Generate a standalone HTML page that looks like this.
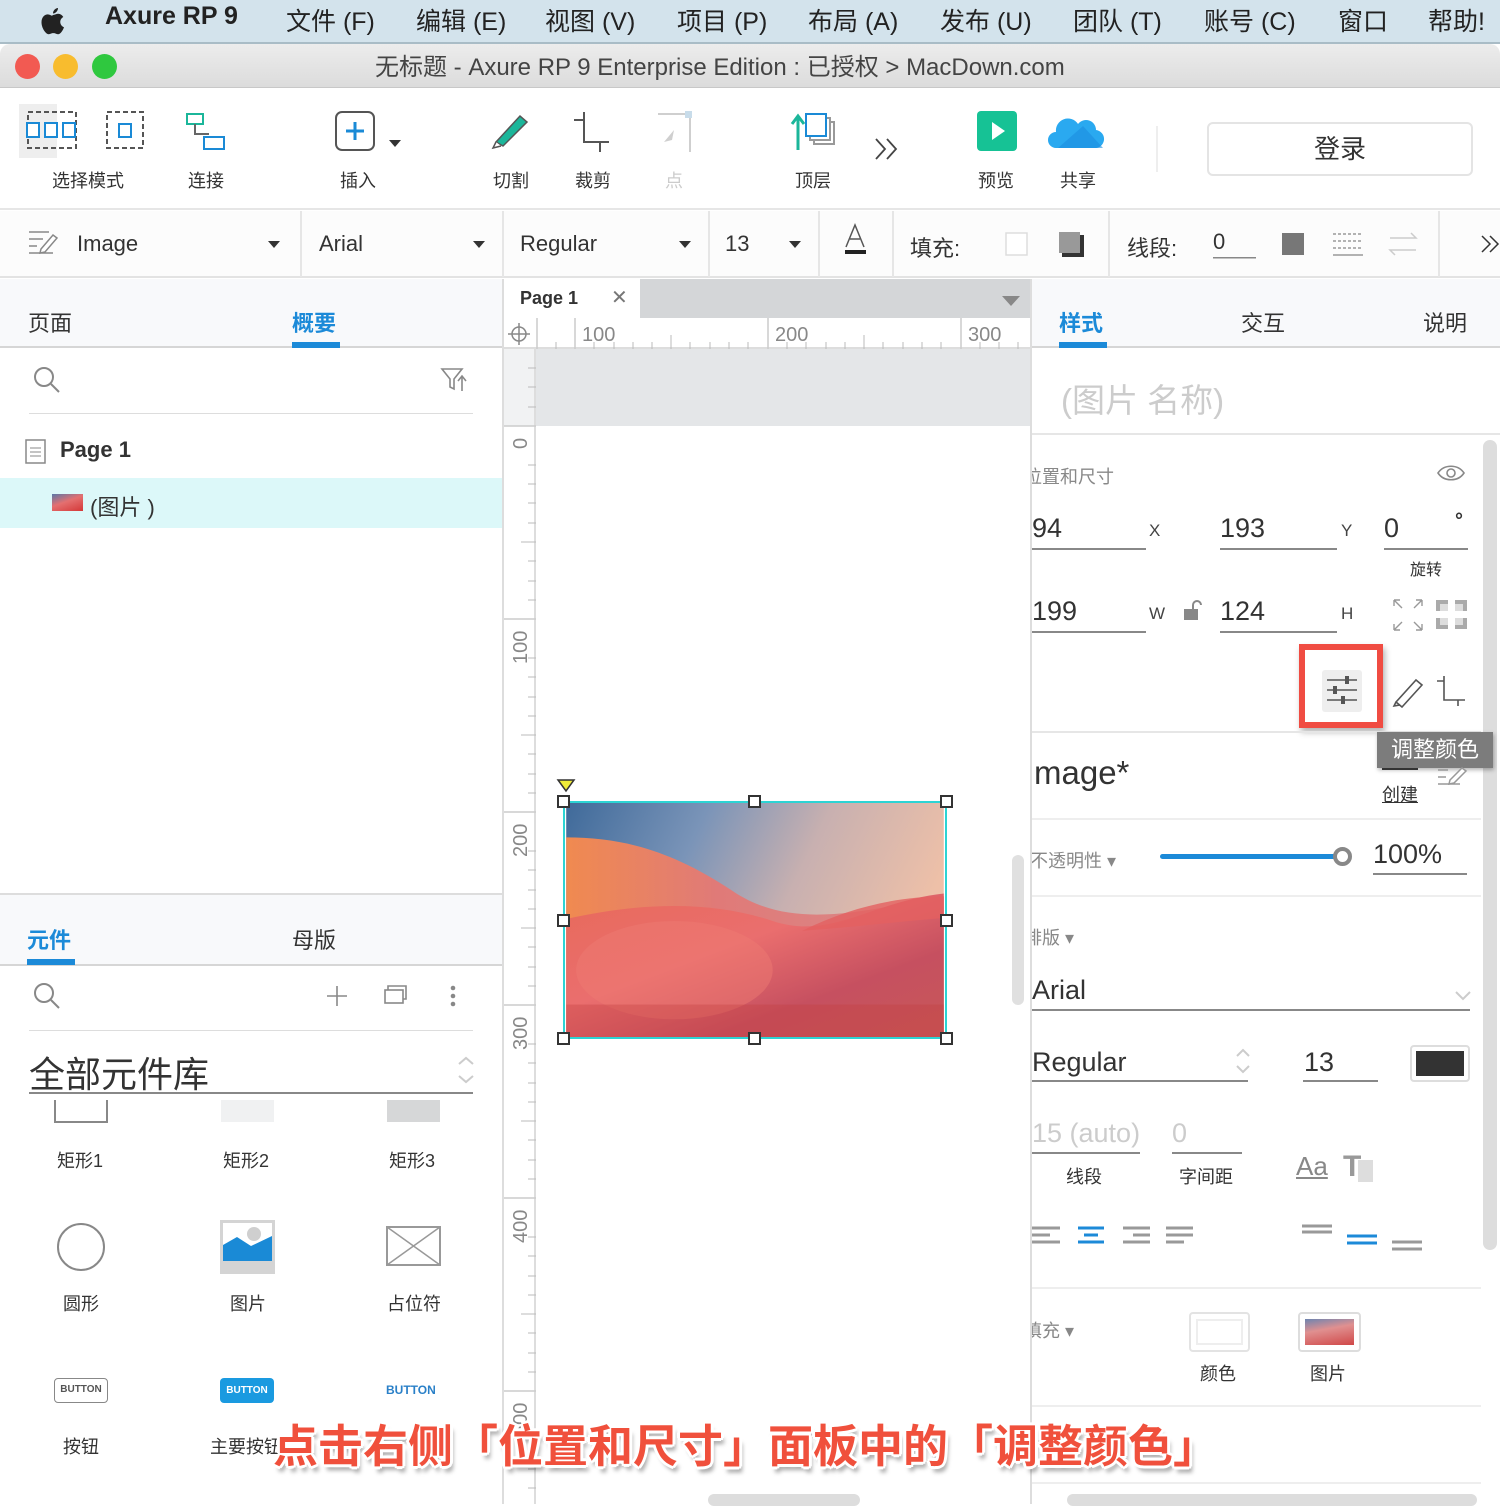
<!DOCTYPE html>
<html><head><meta charset="utf-8">
<style>
*{margin:0;padding:0;box-sizing:border-box}
body{width:1500px;height:1504px;position:relative;overflow:hidden;background:#fff;font-family:"Liberation Sans","Noto Sans CJK SC",sans-serif;color:#333}
.a{position:absolute;white-space:nowrap}
.menu{left:0;top:0;width:1500px;height:44px;background:#d3e3ec;border-bottom:2px solid #a9bcc6}
.menu span{position:absolute;top:2px;font-size:25px;color:#222}
.title{left:0;top:44px;width:1500px;height:44px;background:linear-gradient(#ececec,#dcdcdc);border-bottom:1px solid #c8c8c8;border-radius:10px 10px 0 0}
.dot{position:absolute;width:25px;height:25px;border-radius:50%;top:10px}
.tb{font-size:18px;color:#333}
.lbl{font-size:18px;color:#333}
.ul{position:absolute;height:2px;background:#888}
.clip{position:absolute;left:1032px;width:468px;overflow:hidden}
.cap{font-size:45px;font-weight:bold;color:#f0503c;text-shadow:3px 0 #fff,-3px 0 #fff,0 3px #fff,0 -3px #fff,2px 2px #fff,-2px -2px #fff,2px -2px #fff,-2px 2px #fff,3px 6px 4px rgba(0,0,0,.35)}
</style></head><body>

<div class="a menu">
<svg style="position:absolute;left:38px;top:6px" width="30" height="32" viewBox="0 0 30 32"><path d="M20 2c0 3-2.5 5.5-5 5.5 0-3 2.5-5.5 5-5.5zM15 9c2 0 3-1.2 5-1.2 2.5 0 4.3 1.5 5.3 3.2-4.5 2.5-3.7 8.5 0.7 10.2-1 3-3.5 7-6 7-1.8 0-2.4-1.1-4.6-1.1-2.3 0-3 1.1-4.7 1.1-2.8 0-7.2-6-7.2-12 0-5 3.2-7.8 6.3-7.8 1.9 0 3.3 1.3 4.2 1.3z" fill="#222"/></svg>
<span style="left:105px;font-weight:bold">Axure RP 9</span>
<span style="left:286px">文件 (F)</span><span style="left:416px">编辑 (E)</span><span style="left:545px">视图 (V)</span><span style="left:677px">项目 (P)</span><span style="left:808px">布局 (A)</span><span style="left:940px">发布 (U)</span><span style="left:1073px">团队 (T)</span><span style="left:1204px">账号 (C)</span><span style="left:1338px">窗口</span><span style="left:1428px">帮助!</span>
</div>
<div class="a title">
<div class="dot" style="left:15px;background:#f25a52"></div>
<div class="dot" style="left:53px;background:#f8bc2e"></div>
<div class="dot" style="left:92px;background:#2fc83f"></div>
<div class="a" style="left:375px;top:3px;font-size:24px;color:#444">无标题 - Axure RP 9 Enterprise Edition : 已授权 &gt; MacDown.com</div>
</div>

<div class="a" style="left:0;top:89px;width:1500px;height:121px;background:#fff;border-bottom:2px solid #e6e6e6"></div>
<div class="a" style="left:19px;top:104px;width:38px;height:54px;background:#eee"></div>
<svg class="a" style="left:25px;top:110px" width="125" height="42">
<rect x="3" y="2" width="48" height="36" fill="none" stroke="#555" stroke-width="2" stroke-dasharray="5 3"/>
<rect x="2" y="13" width="12" height="14" fill="#fff" stroke="#1a8ad6" stroke-width="2"/><rect x="20" y="13" width="12" height="14" fill="#fff" stroke="#1a8ad6" stroke-width="2"/><rect x="38" y="13" width="12" height="14" fill="#fff" stroke="#1a8ad6" stroke-width="2"/>
<rect x="82" y="2" width="36" height="36" fill="none" stroke="#555" stroke-width="2" stroke-dasharray="5 3"/>
<rect x="94" y="14" width="12" height="13" fill="none" stroke="#1a8ad6" stroke-width="2"/>
</svg>
<svg class="a" style="left:185px;top:112px" width="45" height="40"><rect x="2" y="2" width="16" height="10" fill="none" stroke="#1bb69a" stroke-width="2"/><path d="M10 12v10h14" stroke="#666" stroke-width="2" fill="none"/><rect x="19" y="25" width="20" height="12" fill="none" stroke="#1a8ad6" stroke-width="2"/></svg>
<div class="a tb" style="left:52px;top:167px">选择模式</div>
<div class="a tb" style="left:188px;top:167px">连接</div>
<svg class="a" style="left:334px;top:110px" width="70" height="44"><rect x="2" y="2" width="38" height="38" rx="6" fill="none" stroke="#555" stroke-width="2"/><path d="M21 12v18M12 21h18" stroke="#1a8ad6" stroke-width="3"/><path d="M55 30l6 7 6-7z" fill="#333"/></svg>
<div class="a tb" style="left:340px;top:167px">插入</div>
<svg class="a" style="left:490px;top:112px" width="45" height="40"><path d="M6 30L30 4l7 6-24 24z" fill="#1bb69a" stroke="#555" stroke-width="1.5"/><path d="M6 30l-3 6 8-2" fill="#fff" stroke="#555" stroke-width="1.5"/></svg>
<svg class="a" style="left:570px;top:110px" width="45" height="44"><path d="M4 10h10M14 2v30h16v10M30 32h9" stroke="#555" stroke-width="2" fill="none"/></svg>
<svg class="a" style="left:652px;top:110px" width="45" height="44" opacity=".4"><path d="M6 4h32v38" stroke="#888" stroke-width="2" fill="none"/><rect x="33" y="1" width="7" height="7" fill="#7ac"/><path d="M12 32l10-12-2 10z" fill="#888"/></svg>
<div class="a tb" style="left:493px;top:167px">切割</div>
<div class="a tb" style="left:575px;top:167px">裁剪</div>
<div class="a tb" style="left:665px;top:167px;color:#ccc">点</div>
<svg class="a" style="left:790px;top:112px" width="48" height="40"><path d="M8 38V4M2 12l6-8 6 8" stroke="#1bb69a" stroke-width="3" fill="none"/><rect x="24" y="10" width="20" height="22" fill="#fff" stroke="#999" stroke-width="2"/><rect x="20" y="6" width="20" height="22" fill="#fff" stroke="#999" stroke-width="2"/><rect x="16" y="2" width="20" height="22" fill="#fff" stroke="#1a8ad6" stroke-width="2"/></svg>
<div class="a tb" style="left:795px;top:167px">顶层</div>
<svg class="a" style="left:874px;top:137px" width="28" height="24"><path d="M2 2l9 10-9 10M13 2l9 10-9 10" stroke="#444" stroke-width="1.8" fill="none"/></svg>
<svg class="a" style="left:977px;top:111px" width="40" height="42"><rect x="0" y="0" width="40" height="40" rx="4" fill="#16c295"/><path d="M15 11v18l13-9z" fill="#fff"/></svg>
<svg class="a" style="left:1048px;top:110px" width="60" height="42"><path d="M8 38a8 8 0 010-16 12 12 0 0122-8 10 10 0 0118 6 9 9 0 01-2 18z" fill="#2aa9f0"/><path d="M10 38l25-22 20 22z" fill="#1d8ee0" opacity=".6"/></svg>
<div class="a tb" style="left:978px;top:167px">预览</div>
<div class="a tb" style="left:1060px;top:167px">共享</div>
<div class="a" style="left:1156px;top:126px;width:2px;height:46px;background:#eee"></div>
<div class="a" style="left:1207px;top:122px;width:266px;height:54px;border:2px solid #e4e4e4;border-radius:6px;font-size:26px;text-align:center;line-height:50px;color:#333">登录</div>

<div class="a" style="left:0;top:211px;width:1500px;height:67px;background:#fcfcfc;border-bottom:2px solid #e3e3e3"></div>
<svg class="a" style="left:27px;top:229px" width="32" height="28"><path d="M2 3h20M2 10h14M2 17h8M2 24h24" stroke="#888" stroke-width="1.5"/><path d="M14 20l12-14 4 3-12 14-5 1z" fill="#fff" stroke="#888" stroke-width="1.5"/></svg>
<div class="a" style="left:77px;top:231px;font-size:22px;color:#333">Image</div>
<div class="a" style="left:300px;top:211px;width:2px;height:66px;background:#e6e6e6"></div>
<div class="a" style="left:319px;top:231px;font-size:22px">Arial</div>
<div class="a" style="left:502px;top:211px;width:2px;height:66px;background:#e6e6e6"></div>
<div class="a" style="left:520px;top:231px;font-size:22px">Regular</div>
<div class="a" style="left:708px;top:211px;width:2px;height:66px;background:#e6e6e6"></div>
<div class="a" style="left:725px;top:231px;font-size:22px">13</div>
<div class="a" style="left:818px;top:211px;width:2px;height:66px;background:#e6e6e6"></div>
<div class="a" style="left:892px;top:211px;width:2px;height:66px;background:#e6e6e6"></div>
<div class="a" style="left:1108px;top:211px;width:2px;height:66px;background:#e6e6e6"></div>
<div class="a" style="left:1438px;top:211px;width:2px;height:66px;background:#e6e6e6"></div>
<svg class="a" style="left:0;top:211px" width="1500" height="66">
<path d="M268 30l6 7 6-7zM473 30l6 7 6-7zM679 30l6 7 6-7zM789 30l6 7 6-7z" fill="#333"/>
<path d="M846 36l9-22 9 22M850 28h10" stroke="#555" stroke-width="1.5" fill="none"/><rect x="845" y="39" width="21" height="4" fill="#222"/>
<rect x="1006" y="22" width="21" height="22" fill="#fff" stroke="#ddd" stroke-width="1.5"/>
<rect x="1062" y="24" width="22" height="22" fill="#333"/><rect x="1059" y="21" width="21" height="21" fill="#999"/>
<rect x="1213" y="46" width="43" height="1.5" fill="#888"/>
<rect x="1282" y="22" width="22" height="22" fill="#777"/>
<path d="M1333 23h30M1333 30h30M1333 37h30" stroke="#999" stroke-width="1.5" stroke-dasharray="3 2"/><path d="M1333 44h30" stroke="#999" stroke-width="1.5"/>
<path d="M1390 27h26l-5-5M1416 39h-26l5 5" stroke="#ccc" stroke-width="1.5" fill="none"/>
<path d="M1482 25l8 8-8 8M1490 25l8 8-8 8" stroke="#333" stroke-width="1.5" fill="none"/>
</svg>
<div class="a" style="left:910px;top:231px;font-size:22px">填充:</div>
<div class="a" style="left:1127px;top:231px;font-size:22px">线段:</div>
<div class="a" style="left:1213px;top:229px;font-size:22px">0</div>

<div class="a" style="left:0;top:279px;width:502px;height:69px;background:#f8f9fb;border-bottom:2px solid #d6d6d6"></div>
<div class="a" style="left:28px;top:306px;font-size:22px">页面</div>
<div class="a" style="left:292px;top:306px;font-size:22px;color:#1c8ad8;font-weight:bold">概要</div>
<div class="a" style="left:292px;top:342px;width:48px;height:6px;background:#1c8ad8"></div>
<svg class="a" style="left:32px;top:365px" width="30" height="30"><circle cx="12" cy="12" r="9" fill="none" stroke="#888" stroke-width="2"/><path d="M19 19l8 8" stroke="#888" stroke-width="2"/></svg>
<svg class="a" style="left:440px;top:367px" width="30" height="26"><path d="M2 2h20l-8 10v10l-4-2v-8z" fill="none" stroke="#888" stroke-width="1.6"/><path d="M22 24V10M18 14l4-5 4 5" stroke="#888" stroke-width="1.6" fill="none"/></svg>
<div class="a" style="left:29px;top:413px;width:444px;height:1px;background:#ddd"></div>
<svg class="a" style="left:25px;top:439px" width="22" height="26"><rect x="1" y="1" width="19" height="23" fill="#fff" stroke="#888" stroke-width="1.5"/><path d="M5 9h11M5 13h11M5 17h11" stroke="#888"/></svg>
<div class="a" style="left:60px;top:437px;font-size:22px;font-weight:bold">Page 1</div>
<div class="a" style="left:0;top:478px;width:502px;height:50px;background:#dcf8f9"></div>
<div class="a" style="left:52px;top:494px;width:31px;height:17px;background:linear-gradient(160deg,#5a78a8,#e47070 45%,#d43838)"></div>
<div class="a" style="left:90px;top:490px;font-size:22px">(图片 )</div>

<div class="a" style="left:0;top:893px;width:502px;height:2px;background:#ddd"></div>
<div class="a" style="left:0;top:895px;width:502px;height:71px;background:#f8f9fb;border-bottom:2px solid #d6d6d6"></div>
<div class="a" style="left:27px;top:923px;font-size:22px;color:#1c8ad8;font-weight:bold">元件</div>
<div class="a" style="left:27px;top:959px;width:48px;height:6px;background:#1c8ad8"></div>
<div class="a" style="left:292px;top:923px;font-size:22px">母版</div>
<svg class="a" style="left:32px;top:981px" width="440" height="32"><circle cx="12" cy="12" r="9" fill="none" stroke="#888" stroke-width="2"/><path d="M19 19l8 8" stroke="#888" stroke-width="2"/>
<path d="M305 5v20M295 15h20" stroke="#888" stroke-width="1.6"/><rect x="353" y="9" width="18" height="13" fill="none" stroke="#888" stroke-width="1.6"/><path d="M356 9V5h18v13h-3" stroke="#888" stroke-width="1.6" fill="none"/>
<circle cx="421" cy="7" r="2.3" fill="#888"/><circle cx="421" cy="15" r="2.3" fill="#888"/><circle cx="421" cy="23" r="2.3" fill="#888"/></svg>
<div class="a" style="left:29px;top:1030px;width:444px;height:1px;background:#ddd"></div>
<div class="a" style="left:29px;top:1046px;font-size:36px;color:#333">全部元件库</div>
<svg class="a" style="left:456px;top:1054px" width="20" height="32"><path d="M3 10l7-6 7 6M3 22l7 6 7-6" stroke="#ccc" stroke-width="2" fill="none"/></svg>
<div class="a" style="left:29px;top:1092px;width:444px;height:2px;background:#888"></div>
<div class="a" style="left:54px;top:1100px;width:54px;height:23px;border:2px solid #888;border-top:none"></div>
<div class="a" style="left:221px;top:1100px;width:53px;height:22px;background:#f0f1f2"></div>
<div class="a" style="left:387px;top:1100px;width:53px;height:22px;background:#d6d7d8"></div>
<div class="a lbl" style="left:57px;top:1147px">矩形1</div>
<div class="a lbl" style="left:223px;top:1147px">矩形2</div>
<div class="a lbl" style="left:389px;top:1147px">矩形3</div>
<div class="a" style="left:57px;top:1223px;width:48px;height:48px;border:2px solid #888;border-radius:50%"></div>
<svg class="a" style="left:220px;top:1220px" width="56" height="54"><rect width="55" height="54" fill="#d4d4d4"/><rect x="3" y="3" width="49" height="38" fill="#fff"/><path d="M3 41V25l14-8 14 9 21-10v25z" fill="#1a8ad6"/><circle cx="34" cy="14" r="7" fill="#cfcfcf"/></svg>
<svg class="a" style="left:386px;top:1226px" width="56" height="42"><rect x="1" y="1" width="53" height="38" fill="#fff" stroke="#999" stroke-width="2"/><path d="M1 1l53 38M54 1L1 39" stroke="#999" stroke-width="1.5"/></svg>
<div class="a lbl" style="left:63px;top:1290px">圆形</div>
<div class="a lbl" style="left:230px;top:1290px">图片</div>
<div class="a lbl" style="left:387px;top:1290px">占位符</div>
<div class="a" style="left:54px;top:1378px;width:54px;height:25px;border:1.5px solid #888;border-radius:4px;font-size:10px;font-weight:bold;text-align:center;line-height:22px;color:#555">BUTTON</div>
<div class="a" style="left:220px;top:1378px;width:54px;height:25px;background:#1a9ae0;border-radius:4px;font-size:10px;font-weight:bold;text-align:center;line-height:25px;color:#fff">BUTTON</div>
<div class="a" style="left:386px;top:1383px;font-size:12px;font-weight:bold;color:#2a80c8">BUTTON</div>
<div class="a lbl" style="left:63px;top:1433px">按钮</div>
<div class="a lbl" style="left:210px;top:1433px">主要按钮</div>

<div class="a" style="left:502px;top:279px;width:2px;height:1225px;background:#ddd"></div>
<div class="a" style="left:504px;top:279px;width:527px;height:39px;background:#d4d6d8"></div>
<div class="a" style="left:504px;top:279px;width:136px;height:39px;background:#fff"></div>
<div class="a" style="left:520px;top:288px;font-size:18px;font-weight:bold">Page 1</div>
<div class="a" style="left:611px;top:285px;font-size:20px;color:#777">✕</div>
<svg class="a" style="left:1002px;top:296px" width="20" height="12"><path d="M0 0h18l-9 10z" fill="#888"/></svg>
<div class="a" style="left:504px;top:318px;width:527px;height:31px;background:#fff;border-bottom:2px solid #ddd"></div>
<svg class="a" style="left:504px;top:318px" width="527" height="31"><circle cx="15" cy="16" r="7" fill="none" stroke="#888" stroke-width="1.5"/><path d="M15 5v22M4 16h22" stroke="#888" stroke-width="1.5"/>
<path d="M33 0v31M71 0v31M264 0v31M457 0v31" stroke="#ccc" stroke-width="1.5"/>
<path d="M52 24v7M90 24v7M110 24v7M129 24v7M148 24v7M167 17v14M186 24v7M206 24v7M225 24v7M244 24v7M283 24v7M302 24v7M322 24v7M341 24v7M360 17v14M379 24v7M399 24v7M418 24v7M437 24v7M476 24v7M495 24v7M514 24v7" stroke="#bbb"/>
<text x="78" y="23" font-size="20" fill="#888" font-family="Liberation Sans">100</text><text x="271" y="23" font-size="20" fill="#888" font-family="Liberation Sans">200</text><text x="464" y="23" font-size="20" fill="#888" font-family="Liberation Sans">300</text></svg>
<div class="a" style="left:504px;top:349px;width:32px;height:1155px;background:#fff;border-right:2px solid #ddd"></div>
<div class="a" style="left:504px;top:349px;width:32px;height:77px;background:#f1f2f3;border-right:2px solid #ddd"></div>
<svg class="a" style="left:504px;top:349px" width="32" height="1155">
<g stroke="#bbb"><path d="M24 19h8M24 38h8M24 58h8M24 116h8M24 135h8M24 154h8M24 174h8M17 193h15M24 212h8M24 232h8M24 251h8M24 270h8M24 309h8M24 328h8M24 348h8M24 367h8M17 386h15M24 405h8M24 425h8M24 444h8M24 463h8M24 502h8M24 521h8M24 541h8M24 560h8M17 579h15M24 598h8M24 618h8M24 637h8M24 656h8M24 695h8M24 714h8M24 734h8M24 753h8M17 772h15M24 791h8M24 811h8M24 830h8M24 849h8M24 888h8M24 907h8M24 927h8M24 946h8M17 965h15M24 984h8M24 1004h8M24 1023h8M24 1042h8M24 1081h8M24 1100h8M24 1120h8M24 1139h8"/></g>
<path d="M0 77h32M0 270h32M0 463h32M0 656h32M0 849h32M0 1042h32" stroke="#ccc" stroke-width="1.5"/>
<g font-size="20" fill="#888" font-family="Liberation Sans"><text transform="translate(23,100) rotate(-90)">0</text><text transform="translate(23,315) rotate(-90)">100</text><text transform="translate(23,508) rotate(-90)">200</text><text transform="translate(23,701) rotate(-90)">300</text><text transform="translate(23,894) rotate(-90)">400</text><text transform="translate(23,1087) rotate(-90)">500</text></g></svg>
<div class="a" style="left:536px;top:349px;width:495px;height:77px;background:#e4e6e8"></div>
<div class="a" style="left:1012px;top:855px;width:12px;height:150px;background:#e0e0e0;border-radius:6px"></div>
<div class="a" style="left:708px;top:1494px;width:152px;height:12px;background:#ddd;border-radius:6px"></div>

<svg class="a" style="left:563px;top:801px;border:2px solid #2cd4d4" width="384" height="238" viewBox="0 0 384 238">
<defs>
<linearGradient id="sky" x1="0" y1="0" x2="1" y2="0.3"><stop offset="0" stop-color="#3f6a9a"/><stop offset=".35" stop-color="#7a94b8"/><stop offset=".65" stop-color="#c8b0b0"/><stop offset="1" stop-color="#eec0a8"/></linearGradient>
<linearGradient id="w1" x1="0" y1="0" x2="1" y2="0"><stop offset="0" stop-color="#f08a50"/><stop offset=".4" stop-color="#e07a78"/><stop offset="1" stop-color="#d98a8a"/></linearGradient>
<linearGradient id="w2" x1="0" y1="0" x2="1" y2="1"><stop offset="0" stop-color="#e86a5a"/><stop offset=".4" stop-color="#ea6e6e"/><stop offset=".7" stop-color="#c65060"/><stop offset="1" stop-color="#c85858"/></linearGradient>
</defs>
<rect width="384" height="238" fill="url(#sky)"/>
<path d="M0 35C60 35 110 50 170 90S300 110 384 95V238H0z" fill="url(#w1)"/>
<path d="M0 118C80 100 150 100 210 120S310 100 384 92V238H0z" fill="url(#w2)"/>
<path d="M240 130C290 105 340 95 384 95v22c-50 4-100 10-144 13z" fill="#e46060" opacity=".8"/>
<ellipse cx="110" cy="170" rx="100" ry="50" fill="#ee7a72" opacity=".5"/>
<rect y="205" width="384" height="33" fill="#c44040" opacity=".35"/>
</svg>
<svg class="a" style="left:555px;top:777px" width="400" height="272">
<path d="M3 3h16l-8 11z" fill="#f0ec38" stroke="#333" stroke-width="1.5"/>
<g fill="#fff" stroke="#333" stroke-width="2"><rect x="3" y="19" width="11" height="11"/><rect x="194" y="19" width="11" height="11"/><rect x="386" y="19" width="11" height="11"/><rect x="3" y="138" width="11" height="11"/><rect x="386" y="138" width="11" height="11"/><rect x="3" y="256" width="11" height="11"/><rect x="194" y="256" width="11" height="11"/><rect x="386" y="256" width="11" height="11"/></g></svg>

<div class="a" style="left:1030px;top:279px;width:2px;height:1225px;background:#ddd"></div>
<div class="a" style="left:1032px;top:279px;width:468px;height:69px;background:#f8f9fb;border-bottom:2px solid #d6d6d6"></div>
<div class="a" style="left:1059px;top:306px;font-size:22px;color:#1c8ad8;font-weight:bold">样式</div>
<div class="a" style="left:1059px;top:342px;width:48px;height:6px;background:#1c8ad8"></div>
<div class="a" style="left:1241px;top:306px;font-size:22px">交互</div>
<div class="a" style="left:1423px;top:306px;font-size:22px">说明</div>
<div class="a" style="left:1061px;top:374px;font-size:33px;color:#ccc">(图片 名称)</div>
<div class="a" style="left:1032px;top:433px;width:468px;height:2px;background:#e6e6e6"></div>
<div class="a" style="left:1483px;top:440px;width:14px;height:810px;background:#ddd;border-radius:7px"></div>
<div class="clip" style="top:461px;height:28px"><div class="a" style="left:-8px;top:2px;font-size:18px;color:#888">位置和尺寸</div></div>
<svg class="a" style="left:1436px;top:462px" width="30" height="22"><path d="M2 11C8 2 22 2 28 11 22 20 8 20 2 11z" fill="none" stroke="#888" stroke-width="1.6"/><circle cx="15" cy="11" r="4" fill="none" stroke="#888" stroke-width="1.6"/></svg>
<div class="a" style="left:1032px;top:513px;font-size:27px">94</div>
<div class="ul" style="left:1032px;top:548px;width:114px"></div>
<div class="a" style="left:1149px;top:521px;font-size:17px;color:#444">X</div>
<div class="a" style="left:1220px;top:513px;font-size:27px">193</div>
<div class="ul" style="left:1220px;top:548px;width:117px"></div>
<div class="a" style="left:1341px;top:521px;font-size:17px;color:#444">Y</div>
<div class="a" style="left:1384px;top:513px;font-size:27px">0</div>
<div class="a" style="left:1455px;top:510px;font-size:20px;font-weight:bold">°</div>
<div class="ul" style="left:1384px;top:548px;width:84px"></div>
<div class="a" style="left:1410px;top:556px;font-size:16px">旋转</div>
<div class="a" style="left:1032px;top:596px;font-size:27px">199</div>
<div class="ul" style="left:1032px;top:631px;width:114px"></div>
<div class="a" style="left:1149px;top:604px;font-size:17px;color:#444">W</div>
<svg class="a" style="left:1183px;top:600px" width="22" height="22"><rect x="1" y="9" width="14" height="11" fill="#888"/><path d="M10 9V5a4 4 0 018 0" stroke="#888" stroke-width="2" fill="none"/></svg>
<div class="a" style="left:1220px;top:596px;font-size:27px">124</div>
<div class="ul" style="left:1220px;top:631px;width:117px"></div>
<div class="a" style="left:1341px;top:604px;font-size:17px;color:#444">H</div>
<svg class="a" style="left:1392px;top:598px" width="78" height="34"><g stroke="#999" stroke-width="1.4" fill="none"><path d="M2 2l8 8M2 2v6M2 2h6M30 2l-8 8M30 2v6M30 2h-6M2 32l8-8M2 32v-6M2 32h6M30 32l-8-8M30 32v-6M30 32h-6"/></g>
<g fill="#aaa"><rect x="44" y="2" width="12" height="11"/><rect x="63" y="2" width="12" height="11"/><rect x="44" y="20" width="12" height="11"/><rect x="63" y="20" width="12" height="11"/></g><g fill="#ddd"><rect x="48" y="6" width="8" height="7"/><rect x="63" y="6" width="8" height="7"/><rect x="48" y="20" width="8" height="7"/><rect x="63" y="20" width="8" height="7"/></g></svg>
<div class="a" style="left:1299px;top:644px;width:84px;height:84px;border:6px solid #f04c42;box-shadow:2px 4px 6px rgba(0,0,0,.3);background:#fff"></div>
<div class="a" style="left:1322px;top:670px;width:40px;height:42px;background:#eee;border-radius:3px"></div>
<svg class="a" style="left:1325px;top:674px" width="36" height="32"><g stroke="#555" stroke-width="1.6"><path d="M2 6h30M2 16h30M2 26h30"/></g><g fill="#555"><rect x="20" y="2" width="4" height="8"/><rect x="8" y="12" width="4" height="8"/><rect x="16" y="22" width="4" height="8"/></g></svg>
<svg class="a" style="left:1392px;top:672px" width="80" height="36"><path d="M4 30L24 8l6 5-20 22z" fill="#fff" stroke="#555" stroke-width="1.6"/><path d="M4 30l-2 4 6-1" stroke="#555" stroke-width="1.6" fill="none"/><path d="M45 9h7M52 4v24h14v6M66 28h7" stroke="#555" stroke-width="1.6" fill="none"/></svg>
<div class="a" style="left:1032px;top:731px;width:449px;height:2px;background:#e6e6e6"></div>
<div class="a" style="left:1377px;top:732px;width:116px;height:36px;background:#7c7c7c;color:#fff;font-size:22px;line-height:36px;text-align:center;box-shadow:1px 2px 4px rgba(0,0,0,.3)">调整颜色</div>
<div class="a" style="left:1034px;top:754px;font-size:33px">mage*</div>
<div class="a" style="left:1382px;top:781px;font-size:18px;text-decoration:underline">创建</div>
<div class="a" style="left:1382px;top:768px;width:36px;height:2px;background:#333"></div>
<svg class="a" style="left:1436px;top:764px" width="32" height="24"><path d="M2 6h10M2 13h8M2 20h22" stroke="#999" stroke-width="1.5"/><path d="M14 16l12-12 4 3-12 12-5 1z" fill="#fff" stroke="#999" stroke-width="1.5"/></svg>
<div class="a" style="left:1032px;top:818px;width:449px;height:2px;background:#eee"></div>
<div class="clip" style="top:845px;height:28px"><div class="a" style="left:-2px;top:2px;font-size:18px;color:#888">不透明性 ▾</div></div>
<div class="a" style="left:1160px;top:854px;width:178px;height:5px;background:#1c8ad8;border-radius:3px"></div>
<div class="a" style="left:1333px;top:847px;width:19px;height:19px;border:4px solid #888;border-radius:50%;background:#fff"></div>
<div class="a" style="left:1373px;top:839px;font-size:27px">100%</div>
<div class="ul" style="left:1373px;top:873px;width:94px"></div>
<div class="a" style="left:1032px;top:895px;width:449px;height:2px;background:#eee"></div>
<div class="clip" style="top:922px;height:28px"><div class="a" style="left:-8px;top:2px;font-size:18px;color:#888">排版 ▾</div></div>
<div class="a" style="left:1032px;top:975px;font-size:27px">Arial</div>
<svg class="a" style="left:1454px;top:990px" width="18" height="12"><path d="M2 2l7 7 7-7" stroke="#ccc" stroke-width="2" fill="none"/></svg>
<div class="ul" style="left:1032px;top:1009px;width:438px"></div>
<div class="a" style="left:1032px;top:1047px;font-size:27px">Regular</div>
<svg class="a" style="left:1234px;top:1046px" width="18" height="30"><path d="M3 10l6-6 6 6M3 20l6 6 6-6" stroke="#ccc" stroke-width="2" fill="none"/></svg>
<div class="ul" style="left:1032px;top:1080px;width:216px"></div>
<div class="a" style="left:1304px;top:1047px;font-size:27px">13</div>
<div class="ul" style="left:1303px;top:1080px;width:75px"></div>
<div class="a" style="left:1410px;top:1045px;width:60px;height:37px;border:2px solid #ddd;border-radius:4px;padding:4px"><div style="width:100%;height:100%;background:#333"></div></div>
<div class="a" style="left:1032px;top:1118px;font-size:27px;color:#ccc">15 (auto)</div>
<div class="ul" style="left:1032px;top:1152px;width:108px"></div>
<div class="a" style="left:1172px;top:1118px;font-size:27px;color:#ccc">0</div>
<div class="ul" style="left:1172px;top:1152px;width:70px"></div>
<div class="a" style="left:1066px;top:1163px;font-size:18px">线段</div>
<div class="a" style="left:1179px;top:1163px;font-size:18px">字间距</div>
<div class="a" style="left:1296px;top:1151px;font-size:26px;color:#888;text-decoration:underline">Aa</div>
<div class="a" style="left:1343px;top:1150px;font-size:30px;font-weight:bold;color:#999">T</div>
<div class="a" style="left:1358px;top:1160px;width:15px;height:22px;background:#ddd"></div>
<svg class="a" style="left:1032px;top:1222px" width="440" height="34"><g stroke-width="3">
<path d="M0 6h28M0 13h18M0 20h28" stroke="#999"/><path d="M46 6h26M52 13h14M46 20h26" stroke="#1c8ad8"/><path d="M91 6h27M101 13h17M91 20h27" stroke="#999"/><path d="M134 6h27M134 13h27M134 20h18" stroke="#999"/>
<path d="M270 4h30M270 10h30" stroke="#999"/><path d="M315 14h30M315 21h30" stroke="#1c8ad8"/><path d="M360 20h30M360 27h30" stroke="#999"/></g></svg>
<div class="a" style="left:1032px;top:1287px;width:449px;height:2px;background:#eee"></div>
<div class="clip" style="top:1315px;height:28px"><div class="a" style="left:-8px;top:2px;font-size:18px;color:#888">填充 ▾</div></div>
<div class="a" style="left:1189px;top:1312px;width:61px;height:40px;border:2px solid #e3e3e3;border-radius:4px;padding:5px"><div style="width:100%;height:100%;border:2px solid #eee"></div></div>
<div class="a" style="left:1298px;top:1312px;width:63px;height:40px;border:2px solid #ddd;border-radius:4px;padding:5px"><div style="width:100%;height:100%;background:linear-gradient(170deg,#6d84b0,#e09090 40%,#d04848)"></div></div>
<div class="a" style="left:1200px;top:1360px;font-size:18px">颜色</div>
<div class="a" style="left:1310px;top:1360px;font-size:18px">图片</div>
<div class="a" style="left:1032px;top:1405px;width:449px;height:2px;background:#eee"></div>
<div class="a" style="left:1032px;top:1482px;width:449px;height:2px;background:#eee"></div>
<div class="a" style="left:1067px;top:1494px;width:410px;height:12px;background:#ddd;border-radius:6px"></div>

<div class="a cap" style="left:273px;top:1410px">点击右侧「位置和尺寸」面板中的「调整颜色」</div>
</body></html>
